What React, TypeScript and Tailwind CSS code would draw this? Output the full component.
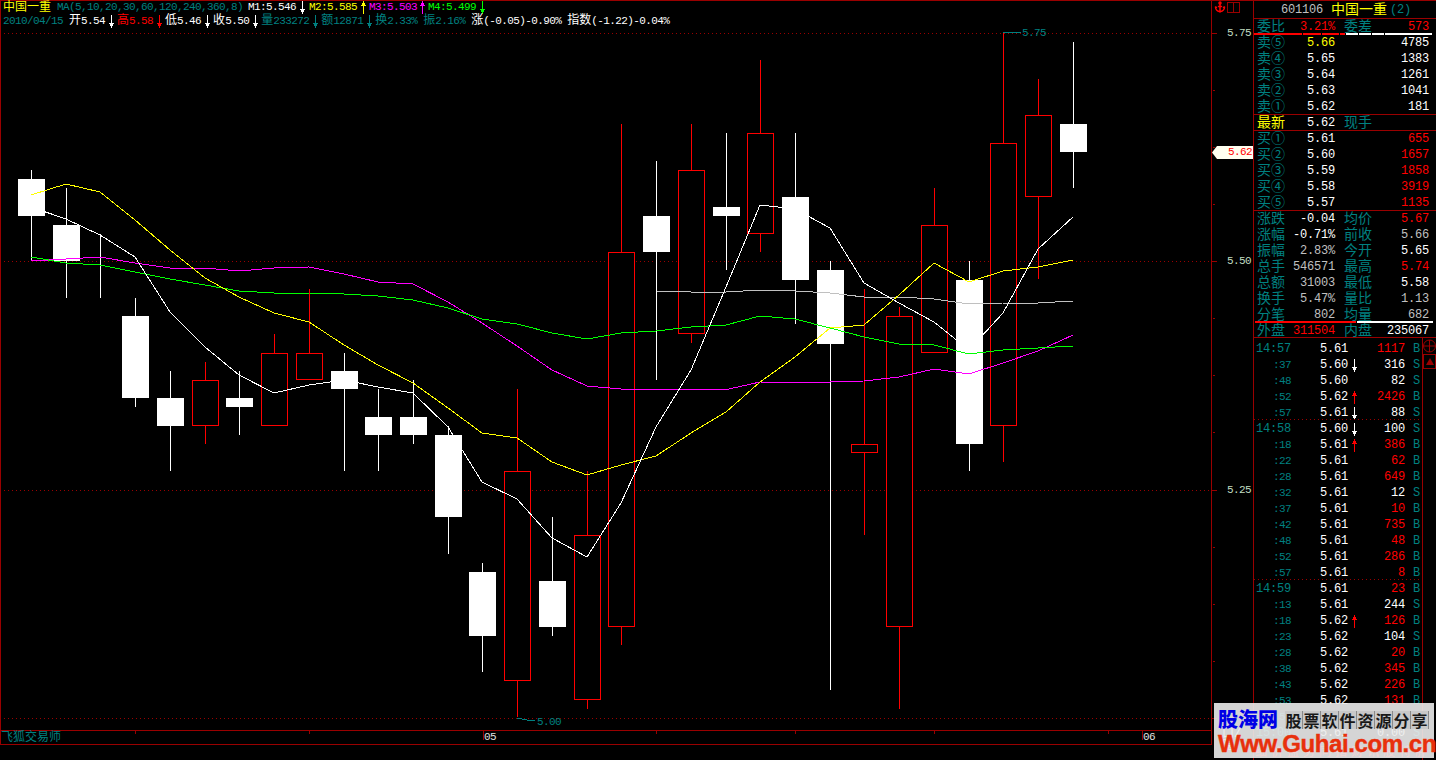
import { Anchor } from "lucide-react";

const BIG = "text-[12px] tracking-[-0.2px]";
const TEAL = "text-[#008080]";

// [center x, wick top, body top, body bottom, wick bottom, up?]
const candles: [number, number, number, number, number, boolean][] = [
  [31, 170, 179, 216, 261, false],
  [66, 188, 225, 261, 298, false],
  [100, 234, 261, 261, 298, false],
  [135, 298, 316, 398, 407, false],
  [170, 371, 398, 426, 471, false],
  [205, 362, 380, 426, 444, true],
  [239, 371, 398, 407, 435, false],
  [274, 334, 353, 426, 426, true],
  [309, 289, 353, 380, 380, true],
  [344, 353, 371, 389, 471, false],
  [378, 389, 417, 435, 471, false],
  [413, 380, 417, 435, 444, false],
  [448, 426, 435, 517, 554, false],
  [482, 563, 572, 636, 672, false],
  [517, 389, 471, 681, 717, true],
  [552, 517, 581, 627, 636, false],
  [587, 471, 535, 700, 709, true],
  [621, 124, 252, 627, 645, true],
  [656, 161, 216, 252, 380, false],
  [691, 124, 170, 334, 343, true],
  [726, 133, 207, 216, 270, false],
  [760, 60, 133, 234, 252, true],
  [795, 133, 197, 280, 324, false],
  [830, 261, 270, 344, 690, false],
  [864, 289, 444, 453, 535, true],
  [899, 307, 316, 627, 709, true],
  [934, 188, 225, 353, 353, true],
  [969, 261, 280, 444, 471, false],
  [1003, 33, 143, 426, 462, true],
  [1038, 79, 115, 197, 279, true],
  [1073, 42, 124, 152, 188, false],
];

const ma1 = "31,207 66,219 100,235 135,257 170,312 205,347 239,375 274,393 309,385 344,380 378,387 413,393 448,427 482,482 517,499 552,538 587,557 621,503 656,427 691,370 726,287 760,205 795,209 830,228 864,283 899,303 934,322 969,350 1003,313 1038,249 1073,217";
const ma2 = "31,195 66,184 100,192 135,220 170,250 205,278 239,297 274,313 309,322 344,345 378,365 413,383 448,408 482,433 517,438 552,462 587,475 621,465 656,456 691,433 726,412 760,382 795,357 830,328 864,325 899,295 934,263 969,282 1003,271 1038,267 1073,260";
const ma3 = "31,261 66,259 100,257 135,263 170,268 205,268 239,271 274,268 309,267 344,274 378,282 413,284 448,302 482,323 517,346 552,370 587,386 621,389 656,389 691,389 729,389 760,382 800,383 830,382 864,381 899,377 934,369 969,374 1003,363 1038,351 1073,335";
const ma4 = "31,257 66,263 100,265 135,272 170,279 205,285 239,291 274,293 309,293 344,294 378,296 413,300 448,308 482,319 517,324 552,333 587,339 621,333 656,331 691,327 726,325 760,316 795,319 830,328 864,337 899,344 934,345 969,354 1003,350 1038,348 1073,346";
const ma5 = "656,291 691,292 726,292 760,290 795,291 830,293 864,297 899,297 934,299 969,304 1003,303 1038,303 1073,301";

const axisTicks = [90, 147, 204, 318, 375, 432, 547, 604, 661];
const axisMajor = [33, 261, 490, 718];

const sells = [
  ["卖⑤", "5.66", "4785"],
  ["卖④", "5.65", "1383"],
  ["卖③", "5.64", "1261"],
  ["卖②", "5.63", "1041"],
  ["卖①", "5.62", "181"],
];
const buys = [
  ["买①", "5.61", "655"],
  ["买②", "5.60", "1657"],
  ["买③", "5.59", "1858"],
  ["买④", "5.58", "3919"],
  ["买⑤", "5.57", "1135"],
];
const W = "text-white";
const G = "text-[#c0c0c0]";
const R = "text-[#ff0000]";
const stats = [
  ["涨跌", "-0.04", W, "均价", "5.67", R],
  ["涨幅", "-0.71%", W, "前收", "5.66", G],
  ["振幅", "2.83%", G, "今开", "5.65", W],
  ["总手", "546571", G, "最高", "5.74", R],
  ["总额", "31003", G, "最低", "5.58", W],
  ["换手", "5.47%", G, "量比", "1.13", G],
  ["分笔", "802", G, "均量", "682", G],
];

// time, price, arrow, volume, side
const ticks: [string, string, string, string, string][] = [
  ["14:57", "5.61", "", "1117", "B"],
  [":37", "5.60", "d", "316", "S"],
  [":48", "5.60", "", "82", "S"],
  [":52", "5.62", "u", "2426", "B"],
  [":57", "5.61", "d", "88", "S"],
  ["14:58", "5.60", "d", "100", "S"],
  [":18", "5.61", "u", "386", "B"],
  [":22", "5.61", "", "62", "B"],
  [":28", "5.61", "", "649", "B"],
  [":32", "5.61", "", "12", "S"],
  [":37", "5.61", "", "10", "B"],
  [":42", "5.61", "", "735", "B"],
  [":48", "5.61", "", "48", "B"],
  [":52", "5.61", "", "286", "B"],
  [":57", "5.61", "", "8", "B"],
  ["14:59", "5.61", "", "23", "B"],
  [":13", "5.61", "", "244", "S"],
  [":18", "5.62", "u", "126", "B"],
  [":23", "5.62", "", "104", "S"],
  [":28", "5.62", "", "20", "B"],
  [":38", "5.62", "", "345", "B"],
  [":43", "5.62", "", "226", "B"],
  [":53", "5.62", "", "131", "B"],
  [":58", "5.61", "", "7", "S"],
  ["15:00", "5.61", "", "0.00", "S"],
];

function Arrow({ up, className }: { up?: boolean; className: string }) {
  return (
    <svg width="7" height="13" viewBox="0 0 7 13" className={className} shapeRendering="crispEdges">
      <g transform={up ? "rotate(180 3.5 6.5)" : undefined} fill="currentColor">
        <rect x="3" y="0" width="1" height="13" />
        <rect x="1" y="8" width="5" height="1" />
        <rect x="2" y="9" width="3" height="2" />
      </g>
    </svg>
  );
}

function Item({ label, value, color, arrow, boxW, up }: { label: string; value: string; color: string; arrow?: boolean; boxW?: string; up?: boolean }) {
  return (
    <>
      <span className={`${color} text-[12px]`}>{label}</span>
      <span className={`${color} tracking-[-0.6px]`}>{value}</span>
      {arrow && (
        <span className={`flex justify-center ${boxW ?? "w-3"}`}>
          <Arrow up={up} className={color} />
        </span>
      )}
    </>
  );
}

function Chart() {
  return (
    <svg width="1211" height="730" className="absolute -left-px -top-px" shapeRendering="crispEdges" fill="none">
      {axisMajor.map((y) => (
        <line key={y} x1="4" x2="1211" y1={y + 0.5} y2={y + 0.5} stroke="#9a0000" strokeDasharray="1 3" />
      ))}
      {candles.map(([x, wt, bt, bb, wb, up], i) => {
        const c = up ? "#ff0000" : "#ffffff";
        return (
          <g key={i} stroke={c}>
            <line x1={x + 0.5} x2={x + 0.5} y1={wt} y2={wb} />
            <rect x={x - 12.5} y={bt + 0.5} width="26" height={Math.max(bb - bt - 1, 0)} fill={up ? "#000000" : "#ffffff"} />
          </g>
        );
      })}
      <polyline points={ma5} stroke="#c0c0c0" />
      <polyline points={ma3} stroke="#ff00ff" />
      <polyline points={ma4} stroke="#00ff00" />
      <polyline points={ma2} stroke="#ffff00" />
      <polyline points={ma1} stroke="#ffffff" />
      <polyline points="1003,33 1021,32" stroke="#008080" />
      <polyline points="517,718 527,720 535,720" stroke="#008080" />
      <text x="1022" y="36" fill="#008080" fontSize="11" letterSpacing="-0.6" fontFamily="'Liberation Mono',monospace">5.75</text>
      <text x="537" y="725" fill="#008080" fontSize="11" letterSpacing="-0.6" fontFamily="'Liberation Mono',monospace">5.00</text>
    </svg>
  );
}

function Row({ left, mid, midClass, right, rightVal, rightClass }: { left: string; mid: string; midClass: string; right?: string; rightVal: string; rightClass: string }) {
  return (
    <div className="flex h-4 items-center pl-[3px] pt-[2px]">
      <div className="flex w-[78px] items-center justify-between">
        <span className={`${TEAL} text-[14px]`}>{left}</span>
        <span className={`${BIG} ${midClass}`}>{mid}</span>
      </div>
      <div className="ml-[9px] flex w-[85px] items-center justify-between">
        <span className={`${TEAL} text-[14px]`}>{right}</span>
        <span className={`${BIG} ${rightClass}`}>{rightVal}</span>
      </div>
    </div>
  );
}

export default function App() {
  return (
    <div className="relative flex h-[760px] w-[1436px] overflow-hidden bg-black leading-none [font-family:'Liberation_Mono','Noto_Sans_CJK_SC',monospace] text-[11px]">
      {/* chart + time axis */}
      <div className="flex w-[1211px] shrink-0 flex-col">
        <div className="relative h-[730px] shrink-0 border-l border-t border-[#9a0000]">
          <Chart />
          <div className="relative">
            <div className="flex h-[13px] items-center pl-[2px]">
              <span className="text-[12px] text-[#ffff00]">中国一重</span>
              <span className={`${TEAL} ml-[6px] tracking-[-0.6px]`}>MA(5,10,20,30,60,120,240,360,8)</span>
              <span className="w-[5px]" />
              <Item label="" value="M1:5.546" color="text-white" arrow boxW="w-[13px]" />
              <Item label="" value="M2:5.585" color="text-[#ffff00]" arrow up />
              <Item label="" value="M3:5.503" color="text-[#ff00ff]" arrow up boxW="w-[11px]" />
              <Item label="" value="M4:5.499" color="text-[#00ff00]" arrow boxW="w-[13px]" />
            </div>
            <div className="flex h-[14px] items-center pl-[2px]">
              <span className={`${TEAL} tracking-[-0.6px]`}>2010/04/15</span>
              <span className="w-[6px]" />
              <Item label="开" value="5.54" color="text-white" arrow />
              <Item label="高" value="5.58" color="text-[#ff0000]" arrow />
              <Item label="低" value="5.46" color="text-white" arrow />
              <Item label="收" value="5.50" color="text-white" arrow />
              <Item label="量" value="233272" color={TEAL} arrow />
              <Item label="额" value="12871" color={TEAL} arrow />
              <Item label="换" value="2.33%" color={TEAL} />
              <span className="w-[6px]" />
              <Item label="振" value="2.16%" color={TEAL} />
              <span className="w-[6px]" />
              <Item label="涨" value="(-0.05)-0.90%" color="text-white" />
              <span className="w-[6px]" />
              <Item label="指数" value="(-1.22)-0.04%" color="text-white" />
            </div>
          </div>
        </div>
        <div className="relative flex h-[15px] shrink-0 items-center border-y border-l border-[#9a0000]">
          <span className={`${TEAL} text-[12px]`}>飞狐交易师</span>
          {[134, 308, 655, 794, 933, 1107].map((x) => (
            <span key={x} className="absolute top-0 h-[3px] w-px bg-[#9a0000]" style={{ left: x }} />
          ))}
          {[482, 1141].map((x) => (
            <span key={x} className="absolute top-0 h-[9px] w-px bg-[#9a0000]" style={{ left: x }} />
          ))}
          <span className="absolute left-[483px] top-[1px] tracking-[-0.6px] text-[#e0e0e0]">05</span>
          <span className="absolute left-[1142px] top-[1px] tracking-[-0.6px] text-[#e0e0e0]">06</span>
        </div>
      </div>

      {/* price axis */}
      <div className="relative h-[745px] w-[42px] shrink-0 border-l border-t border-[#9a0000]">
        <div className="absolute left-[2px] top-0 flex items-center">
          <Anchor size={12} strokeWidth={3} color="#ff0000" />
          <div className="ml-px flex h-[11px]">
            <span className="h-[11px] w-[7px] border border-[#9a0000]" />
            <span className="-ml-px h-[11px] w-[7px] border border-[#9a0000]" />
          </div>
        </div>
        {axisMajor.map((y) => (
          <span key={y} className="absolute left-0 h-px w-[5px] bg-[#9a0000]" style={{ top: y - 1 }} />
        ))}
        {axisTicks.map((y) => (
          <span key={y} className="absolute left-px h-px w-[2px] bg-[#9a0000]" style={{ top: y - 1 }} />
        ))}
        {[["5.75", 27], ["5.50", 255], ["5.25", 484]].map(([t, y]) => (
          <span key={t} className="absolute right-[2px] tracking-[-0.6px] text-[#c0dcc0]" style={{ top: y }}>
            {t}
          </span>
        ))}
        <span className="absolute left-[10px] top-[727px] text-[12px] text-white">口/隐</span>
        {/* current price tag */}
        <div className="absolute left-0 top-[145px] flex h-[13px] w-[41px] items-center justify-end bg-[#fffff0] pr-px tracking-[-0.6px] text-[#ff0000] [clip-path:polygon(0_50%,5px_0,100%_0,100%_100%,5px_100%)]">
          5.62
        </div>
      </div>

      {/* quote panel */}
      <div className="flex h-[760px] w-[183px] shrink-0 flex-col border-l border-t border-[#9a0000]">
        <div className="flex h-[18px] shrink-0 items-center gap-[8px] border-b border-[#9a0000] pl-[27px]">
          <span className={`${BIG} text-[#c0c0c0]`}>601106</span>
          <span className="text-[14px] text-[#ffff00]">中国一重</span>
          <span className={`${BIG} -ml-[5px] ${TEAL}`}>(2)</span>
        </div>
        <div className="flex h-[14px] shrink-0 items-center pl-[3px] pt-[2px]">
          <div className="flex w-[78px] items-center justify-between">
            <span className={`${TEAL} text-[14px]`}>委比</span>
            <span className={`${BIG} text-[#ff0000]`}>3.21%</span>
          </div>
          <div className="ml-[9px] flex w-[85px] items-center justify-between">
            <span className={`${TEAL} text-[14px]`}>委差</span>
            <span className={`${BIG} text-[#ff0000]`}>573</span>
          </div>
        </div>
        <div className="relative -mb-px flex h-[2px] shrink-0 gap-px">
          <span className="w-[48px] bg-[#ff0000]" />
          <span className="w-[18px] bg-[#ff0000]" />
          <span className="w-[17px] bg-[#ff0000]" />
          <span className="w-[5px] bg-[#ff0000]" />
          <span className="w-[12px] bg-white" />
          <span className="w-[12px] bg-white" />
          <span className="w-[12px] bg-white" />
          <span className="w-[47px] bg-white" />
        </div>
        <div className="shrink-0 border-b border-[#9a0000]">
          {sells.map(([l, p, v], i) => (
            <Row key={l} left={l} mid={p} midClass={i === 0 ? "text-[#ffff00]" : "text-white"} rightVal={v} rightClass="text-white" />
          ))}
        </div>
        <div className="flex h-[16px] shrink-0 items-center border-b border-[#9a0000] pl-[3px]">
          <div className="flex w-[78px] items-center justify-between">
            <span className="text-[14px] text-[#ffff00]">最新</span>
            <span className={`${BIG} text-white`}>5.62</span>
          </div>
          <span className={`${TEAL} ml-[9px] text-[14px]`}>现手</span>
        </div>
        <div className="-mt-px shrink-0 border-b border-[#9a0000]">
          {buys.map(([l, p, v]) => (
            <Row key={l} left={l} mid={p} midClass="text-white" rightVal={v} rightClass="text-[#ff0000]" />
          ))}
        </div>
        <div className="-mt-px shrink-0">
          {stats.map(([a, b, bc, c, d, dc]) => (
            <Row key={a} left={a} mid={b} midClass={bc} right={c} rightVal={d} rightClass={dc} />
          ))}
        </div>
        <div className="relative -mt-px flex h-[2px] shrink-0 pl-px">
          <span className="w-[101px] bg-[#ff0000]" />
          <span className="ml-px w-[76px] bg-white" />
        </div>
        <div className="flex h-[15px] shrink-0 items-center border-b border-[#9a0000] pl-[3px] pt-[2px]">
          <div className="flex w-[78px] items-center justify-between">
            <span className={`${TEAL} text-[14px]`}>外盘</span>
            <span className={`${BIG} text-[#ff0000]`}>311504</span>
          </div>
          <div className="ml-[9px] flex w-[85px] items-center justify-between">
            <span className={`${TEAL} text-[14px]`}>内盘</span>
            <span className={`${BIG} text-white`}>235067</span>
          </div>
        </div>

        {/* tick list + side strip */}
        <div className="relative flex min-h-0 flex-1">
          <div className="w-[168px] pt-[3px]">
            {ticks.map(([t, p, a, v, s], i) => (
              <div key={i} className="relative flex h-4 items-center">
                {(t === "14:58" || t === "14:59") && (
                  <span className="absolute -top-[2px] left-0 h-px w-[166px] bg-[repeating-linear-gradient(90deg,#9a0000_0_1px,transparent_1px_4px)]" />
                )}
                <span className={`w-[37px] text-right ${TEAL} ${t.length > 3 ? BIG : "tracking-[-0.6px]"}`}>{t}</span>
                <span className={`${BIG} ml-[29px] w-[28px] text-white`}>{p}</span>
                <span className="flex w-3 justify-center">
                  {a && <Arrow up={a === "u"} className={a === "u" ? "text-[#ff0000]" : "text-white"} />}
                </span>
                <span className={`${BIG} w-[45px] text-right ${s === "B" ? "text-[#ff0000]" : "text-white"}`}>{v}</span>
                <span className={`${BIG} ${TEAL} ml-2`}>{s}</span>
              </div>
            ))}
            <div className="mt-[6px] whitespace-nowrap pl-px text-[12px] tracking-[4px] text-[#ff0000]">细价盘势同指财讯股特胖</div>
          </div>
          <div className="flex flex-1 flex-col items-center border-l border-[#9a0000]">
            <svg width="13" height="14" viewBox="0 0 13 14" className="mt-px" fill="none" stroke="#9a0000">
              <circle cx="6.5" cy="7" r="6" />
              <path d="M0.5 7h12M6.5 1v12" />
            </svg>
            <div className="mt-px flex h-[15px] w-full items-center justify-center border border-[#9a0000]">
              <span className="h-0 w-0 border-x-[4px] border-b-[7px] border-x-transparent border-b-[#9a0000]" />
            </div>
          </div>
        </div>
      </div>

      {/* site watermark */}
      <div className="absolute left-[1214px] top-[703px] flex h-[55px] w-[220px] flex-col bg-[#ececec]/90 pl-[4px] [font-family:'Liberation_Sans','Noto_Sans_CJK_SC',sans-serif]">
        <div className="flex h-[29px] items-center pt-[4px]">
          <span className="text-[20px] font-black text-[#0000e6]">股海网</span>
          <div className="ml-[7px] flex h-[18px] w-[144px] bg-[#c8c8c8]">
            {"股票软件资源分享".split("").map((c) => (
              <span key={c} className="flex w-[18px] items-center justify-center border-r border-[#8a8a8a] text-[16px] font-bold text-[#181818] [font-family:'Noto_Sans_CJK_SC',serif]">
                {c}
              </span>
            ))}
          </div>
        </div>
        <div className="whitespace-nowrap text-[24px] font-bold leading-[24px] tracking-[-0.4px] text-[#e8300c] [-webkit-text-stroke:0.4px_#e8300c]">Www.Guhai.com.cn</div>
      </div>
    </div>
  );
}
